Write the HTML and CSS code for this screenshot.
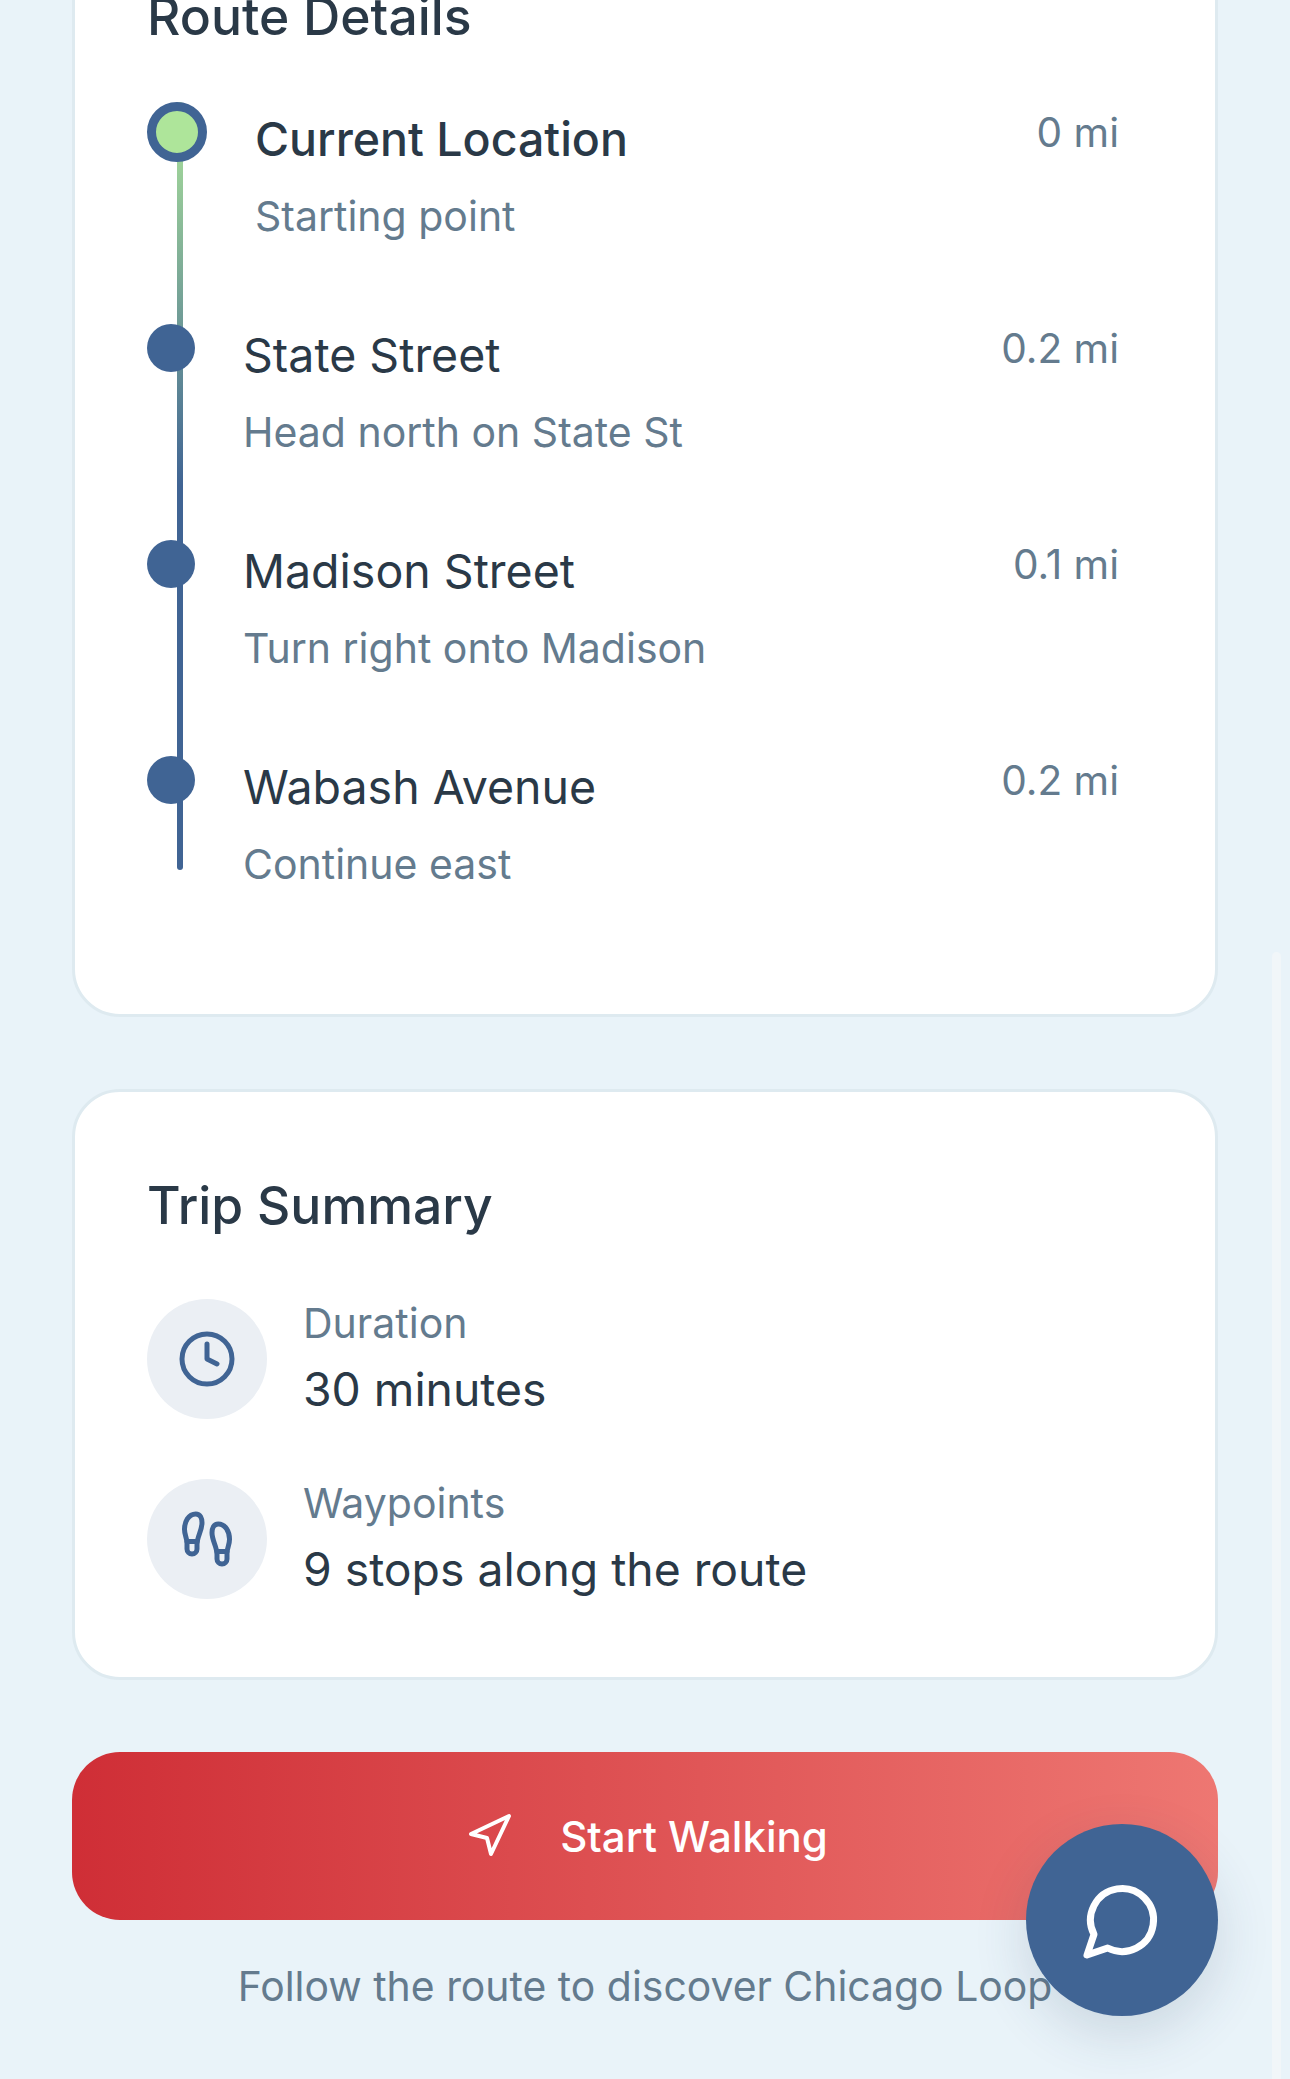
FILE: index.html
```html
<!DOCTYPE html>
<html lang="en">
<head>
<meta charset="utf-8">
<title>Route Details</title>
<link rel="stylesheet" href="styles.css">
</head>
<body>
<main class="page">
  <section class="card route-card">
    <h2 class="card-title">Route Details</h2>
    <ol class="timeline">
      <li class="stop stop-first">
        <span class="dot dot-current"></span>
        <div class="stop-text"><div class="stop-name">Current Location</div><div class="stop-desc">Starting point</div></div>
        <span class="stop-dist">0 mi</span>
      </li>
      <li class="stop">
        <span class="dot"></span>
        <div class="stop-text"><div class="stop-name">State Street</div><div class="stop-desc">Head north on State St</div></div>
        <span class="stop-dist">0.2 mi</span>
      </li>
      <li class="stop">
        <span class="dot"></span>
        <div class="stop-text"><div class="stop-name">Madison Street</div><div class="stop-desc">Turn right onto Madison</div></div>
        <span class="stop-dist">0.1 mi</span>
      </li>
      <li class="stop">
        <span class="dot"></span>
        <div class="stop-text"><div class="stop-name">Wabash Avenue</div><div class="stop-desc">Continue east</div></div>
        <span class="stop-dist">0.2 mi</span>
      </li>
    </ol>
  </section>

  <section class="card summary-card">
    <h2 class="card-title">Trip Summary</h2>
    <div class="facts">
      <div class="fact">
        <span class="fact-icon">
          <svg class="icon-60" viewBox="0 0 24 24" fill="none" stroke="currentColor" stroke-width="2" stroke-linecap="round" stroke-linejoin="round"><circle cx="12" cy="12" r="10"/><polyline points="12 6 12 12 16 14"/></svg>
        </span>
        <div><div class="fact-label">Duration</div><div class="fact-value">30 minutes</div></div>
      </div>
      <div class="fact">
        <span class="fact-icon">
          <svg class="icon-60" viewBox="0 0 24 24" fill="none" stroke="currentColor" stroke-width="2" stroke-linecap="round" stroke-linejoin="round"><path d="M4 16v-2.38C4 11.5 2.97 10.5 3 8c.03-2.72 1.49-6 4.5-6C9.37 2 10 3.8 10 5.5c0 3.11-2 5.66-2 8.68V16a2 2 0 1 1-4 0Z"/><path d="M20 20v-2.38c0-2.12 1.03-3.12 1-5.62-.03-2.72-1.49-6-4.5-6C14.63 6 14 7.8 14 9.5c0 3.11 2 5.66 2 8.68V20a2 2 0 1 0 4 0Z"/><path d="M16 17h4"/><path d="M4 13h4"/></svg>
        </span>
        <div><div class="fact-label">Waypoints</div><div class="fact-value">9 stops along the route</div></div>
      </div>
    </div>
  </section>

  <button class="start-btn" type="button">
    <svg class="icon-48" viewBox="0 0 24 24" fill="none" stroke="currentColor" stroke-width="2" stroke-linecap="round" stroke-linejoin="round"><polygon points="3 11 22 2 13 21 11 13 3 11"/></svg>
    <span>Start Walking</span>
  </button>
  <p class="footnote">Follow the route to discover Chicago Loop</p>
</main>

<button class="fab" type="button" aria-label="Chat">
  <svg class="icon-84" viewBox="0 0 24 24" fill="none" stroke="currentColor" stroke-width="2" stroke-linecap="round" stroke-linejoin="round"><path d="M7.9 20A9 9 0 1 0 4 16.1L2 22Z"/></svg>
</button>
<div class="scrollbar"></div>
</body>
</html>
```
FILE: styles.css
```css
* { box-sizing: border-box; }
html, body { margin: 0; padding: 0; }
body {
  position: relative;
  width: 1290px;
  height: 2079px;
  overflow: hidden;
  background: #e9f3f9;
  font-family: Inter, "Noto Sans", sans-serif;
  color: #2a3947;
}
.page {
  display: flex;
  flex-direction: column;
  padding: 0 72px;
  margin-top: -95px;
}
.card {
  background: #fff;
  border: 3px solid #deeaf0;
  border-radius: 48px;
  padding: 72px;
}
.card-title {
  margin: 0;
  font-size: 51.6px;
  line-height: 72px;
  font-weight: 500;
  color: #2a3947;
}
.route-card { height: 1112px; margin-bottom: 72px; }
.timeline {
  position: relative;
  list-style: none;
  margin: 50px 0 0;
  padding: 0 24px 0 0;
}
.timeline::before {
  content: "";
  position: absolute;
  left: 30px;
  top: 0;
  width: 6px;
  height: 768px;
  border-radius: 3px;
  background: linear-gradient(180deg, #aee59a 0%, #406494 50%);
}
.stop {
  position: relative;
  display: flex;
  align-items: flex-start;
  gap: 48px;
  height: 216px;
}
.dot {
  flex: none;
  width: 48px;
  height: 48px;
  margin-top: 6px;
  border-radius: 50%;
  background: #406494;
  position: relative;
}
.dot-current {
  width: 60px;
  height: 60px;
  margin-top: 0;
  border: 9px solid #406494;
  background: #aee59a;
}
.stop-text { flex: 1; min-width: 0; padding-top: 1px; }
.stop-name {
  font-size: 46.5px;
  line-height: 72px;
  color: #2a3947;
}
.stop-first .stop-name { font-weight: 500; }
.stop-desc {
  margin-top: 10px;
  font-size: 41px;
  line-height: 63px;
  color: #647b8e;
}
.stop-dist {
  font-size: 40.6px;
  line-height: 63px;
  margin-top: -1px;
  color: #647b8e;
}
.summary-card { height: 591px; margin-bottom: 72px; }
.summary-card .card-title { margin-top: 5px; }
.facts {
  display: flex;
  flex-direction: column;
  gap: 48px;
  margin-top: 52px;
}
.fact {
  display: flex;
  align-items: center;
  gap: 36px;
}
.fact-icon {
  flex: none;
  display: flex;
  align-items: center;
  justify-content: center;
  width: 120px;
  height: 120px;
  border-radius: 50%;
  background: #ebeff4;
  color: #406494;
}
.icon-60 { width: 60px; height: 60px; display: block; }
.icon-48 { width: 48px; height: 48px; display: block; }
.icon-84 { width: 84px; height: 84px; display: block; }
.fact-label {
  font-size: 41px;
  line-height: 60px;
  color: #647b8e;
}
.fact-value {
  font-size: 46.3px;
  line-height: 72px;
  color: #2a3947;
}
.start-btn {
  display: flex;
  align-items: center;
  justify-content: center;
  gap: 47px;
  width: 100%;
  height: 168px;
  padding: 0 0 0 3px;
  border: 0;
  border-radius: 48px;
  background: linear-gradient(90deg, #cf2e36 0%, #ee7772 100%);
  color: #fff;
  font-family: inherit;
  font-size: 42px;
  font-weight: 500;
}
.footnote {
  margin: 35px 0 0;
  text-align: center;
  font-size: 40.9px;
  line-height: 63px;
  color: #647b8e;
}
.fab {
  position: absolute;
  left: 1026px;
  top: 1824px;
  width: 192px;
  height: 192px;
  padding: 0;
  border: 0;
  border-radius: 50%;
  background: #406494;
  color: #fff;
  display: flex;
  align-items: center;
  justify-content: center;
  box-shadow: 0 18px 54px rgba(45, 70, 100, 0.16);
}
.scrollbar {
  position: absolute;
  left: 1272px;
  top: 952px;
  width: 9px;
  bottom: 0;
  border-radius: 5px 5px 0 0;
  background: #f1f6f9;
}
```
